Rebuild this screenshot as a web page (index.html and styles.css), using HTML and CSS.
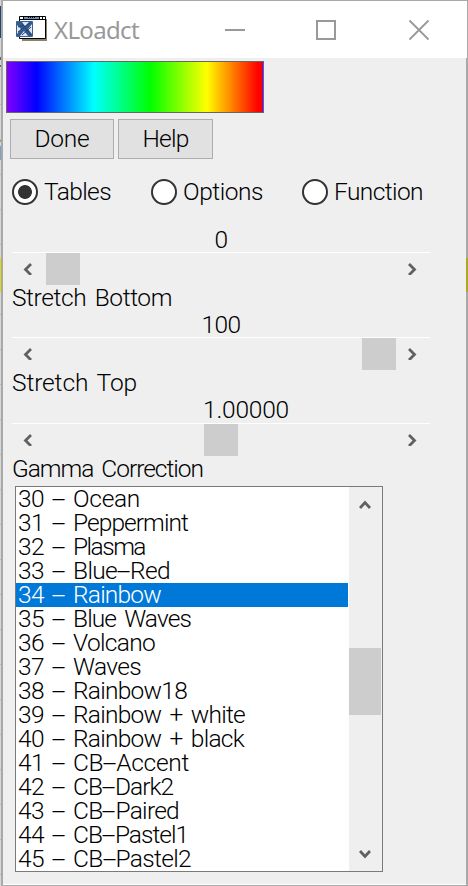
FILE: index.html
```html
<!DOCTYPE html>
<html lang="en">
<head>
<meta charset="utf-8">
<title>XLoadct</title>
<link rel="stylesheet" href="styles.css">
</head>
<body>
<div class="desktop"><i class="band"></i></div>
<main class="window">
  <header class="titlebar">
    <svg class="appicon" width="34" height="28" viewBox="0 0 34 28">
      <path d="M6 23h22V4h3v22H6z" fill="#88836d"/>
      <path d="M3.500 1.500h26v22h-26z" fill="#fff" stroke="#000"/>
      <path d="M7 2h16v2H7z" fill="#6c91bd"/><path d="M4 4.500h25M7.500 1v3M23.500 1v3M26.500 1v3" stroke="#000"/>
      <path d="M12 2.500h8" stroke="#000" stroke-dasharray="1 1"/>
      <path d="M.5 6.500h16v15H.5z" fill="#e3e8ef" stroke="#3b608f"/>
      <path d="M1 7h5l3 4 4-4h3v2l-4 5 4 5v2h-4l-4-5-4 5H1v-2l4-5-4-4z" fill="#315b91"/>
      <path d="M2 12l5-2 8 10M2 17l12-9M6 20l9-8" stroke="#20416d" fill="none"/>
    </svg>
    <h1 data-w="85">XLoadct</h1>
    <svg class="controls" width="206" height="22" viewBox="0 0 206 22" fill="none" stroke="#999">
      <path d="M0 11h20M92 2h18v18H92z" stroke-width="2"/>
      <path d="M184.500 1.500l19 19M203.500 1.500l-19 19" stroke-width="1.800"/>
    </svg>
  </header>
  <div class="spectrum"></div>
  <div class="buttons">
    <button class="done"><span data-w="55">Done</span></button>
    <button class="help"><span data-w="46">Help</span></button>
  </div>
  <div class="radios">
    <label><i class="radio checked"></i><span data-w="67">Tables</span></label>
    <label><i class="radio"></i><span data-w="80">Options</span></label>
    <label><i class="radio"></i><span data-w="89">Function</span></label>
  </div>
  <section class="slider first">
    <div class="value"><span data-w="13">0</span></div>
    <div class="track"><svg class="arrow" viewBox="0 0 10 12"><path d="M8 1L2.500 6.500 8 12"/></svg><i class="thumb"></i><svg class="arrow end" viewBox="0 0 10 12"><path d="M2 1l5.500 5.500L2 12"/></svg></div>
    <div class="caption"><span data-w="160">Stretch Bottom</span></div>
  </section>
  <section class="slider second">
    <div class="value"><span data-w="39">100</span></div>
    <div class="track"><svg class="arrow" viewBox="0 0 10 12"><path d="M8 1L2.500 6.500 8 12"/></svg><i class="thumb"></i><svg class="arrow end" viewBox="0 0 10 12"><path d="M2 1l5.500 5.500L2 12"/></svg></div>
    <div class="caption"><span data-w="125">Stretch Top</span></div>
  </section>
  <section class="slider third">
    <div class="value"><span data-w="86">1.00000</span></div>
    <div class="track"><svg class="arrow" viewBox="0 0 10 12"><path d="M8 1L2.500 6.500 8 12"/></svg><i class="thumb"></i><svg class="arrow end" viewBox="0 0 10 12"><path d="M2 1l5.500 5.500L2 12"/></svg></div>
    <div class="caption"><span data-w="191">Gamma Correction</span></div>
  </section>
  <div class="listbox">
    <ul id="tables"></ul>
    <div class="scrollbar">
      <svg width="12" height="10" viewBox="0 0 12 10"><path d="M1 8l5-5.500L11 8"/></svg>
      <i class="scrollthumb"></i>
      <svg width="12" height="10" viewBox="0 0 12 10"><path d="M1 2l5 5.500L11 2"/></svg>
    </div>
  </div>
</main>
<script src="script.js"></script>
</body>
</html>
```
FILE: styles.css
```css
* { box-sizing: border-box; }
body {
  margin: 0;
  width: 468px;
  height: 886px;
  overflow: hidden;
  position: relative;
  color: #000;
  font: 300 24.5px/24px Roboto, "Liberation Sans", sans-serif;
  word-spacing: 3px;
}
.desktop {
  position: absolute;
  inset: 0;
  background:
    linear-gradient(#204473, #204473) 0 6px / 3px 32px no-repeat,
    linear-gradient(#666, #666) 0 57px / 3px 3px no-repeat,
    linear-gradient(#666, #666) 0 65px / 3px 2px no-repeat,
    linear-gradient(#c19a5a, #c19a5a) 0 140px / 3px 2px no-repeat,
    linear-gradient(#7f9fc5, #7f9fc5) 0 146px / 3px 14px no-repeat,
    repeating-linear-gradient(#d7d7d7 0 34px, #bbb 34px 35px);
}
.band {
  display: block;
  height: 34px;
  margin-top: 258px;
  background: #dede00;
}
.window {
  position: relative;
  width: 467px;
  height: 886px;
  margin-left: 1px;
  background: #efefef;
  border: solid #a9a9a9;
  border-width: 1px 1px 1px 2px;
  box-shadow: inset 0 -1px #fff;
}
.window::after {
  content: "";
  position: absolute;
  right: -1px;
  top: 57px;
  bottom: -1px;
  width: 2px;
  background: linear-gradient(#a9a9a9 200px, #a9aa22 200px 234px, #a9a9a9 234px);
}
span, h1 { white-space: pre; }
span[data-w], h1 { display: inline-block; }
.titlebar {
  height: 57px;
  background: #fff;
  display: flex;
  align-items: center;
  padding-left: 13px;
}
.appicon { margin-top: -1px; }
h1 {
  margin: 0 0 0 4px;
  width: 85px;
  font: 400 24px/28px "Noto Sans", sans-serif;
  color: #999;
}
.controls { margin-left: 86px; }
.spectrum {
  width: 258px;
  height: 52px;
  margin: 3px 0 6px 3px;
  border: 1px solid #666;
  background: linear-gradient(90deg, #8000ff, #00f 11.500%, #0ff 34%, #0f0 56%, #ff0 78%, #f00 98% 99.500%, #8000ff 99.500%);
}
.buttons { display: flex; gap: 4px; padding-left: 7px; }
button {
  height: 40px;
  padding: 0 0 1px;
  border: 1px solid #adadad;
  background: #e1e1e1;
  color: #000;
  font: inherit;
}
.done { width: 104px; }
.help { width: 95px; }
.radios {
  display: grid;
  grid-template-columns: 139px 151px auto;
  height: 26px;
  margin: 20px 0 0 9px;
}
label { display: flex; align-items: center; gap: 6px; }
label span { margin-bottom: 1px; }
.radio {
  width: 26px;
  height: 26px;
  background: #fff;
  border: 2px solid #333;
  border-radius: 50%;
}
.checked { background: radial-gradient(circle, #333 6.500px, #fff 7.300px); }
.slider { width: 418px; margin-left: 9px; height: 85px; }
.first { margin-top: 23px; }
.third { height: 86px; }
.value { height: 24px; text-align: center; }
.third .value { padding-left: 50px; height: 25px; }
.track {
  display: flex;
  align-items: center;
  height: 33px;
  border-top: 1px solid #fff;
  padding: 0 13px 0 11px;
}
.arrow { width: 10px; height: 12px; }
.arrow path, .scrollbar path { fill: none; stroke: #606060; stroke-width: 2.800; }
.arrow.end { margin-left: auto; }
.thumb { width: 34px; height: 32px; margin-left: 13px; background: #cdcdcd; }
.second .thumb { margin-left: 329px; }
.third .thumb { margin-left: 171px; }
.caption { height: 25px; padding-top: 1px; }
.listbox {
  display: flex;
  width: 368px;
  height: 386px;
  margin: 2px 0 0 12px;
  border: 1px solid #7a7a7a;
  background: #fff;
}
ul { list-style: none; margin: 0; padding: 0; width: 333px; }
li { display: flex; height: 24px; padding: 0 0 0 2px; }
li.selected {
  width: 332px;
  background: #0078d7;
  color: #fff;
}
.number { width: 34px; }
.separator { width: 21px; }
.dash { display: inline-block; width: 13px; text-align: center; font-style: normal; letter-spacing: 0; }
.dash b { display: inline-block; font-weight: 300; transform: scaleX(2.100); }
.scrollbar {
  flex: 1;
  display: flex;
  flex-direction: column;
  align-items: center;
  padding: 13px 1px 12px 0;
  background: #efefef;
}
.scrollthumb { width: 100%; height: 67px; margin: 138px 0 auto; background: #cdcdcd; }
```
FILE: script.js
```js
const tables = [
  [30, "Ocean", 140], [31, "Peppermint", 188], [32, "Plasma", 145],
  [33, "Blue-Red", 170], [34, "Rainbow", 161], [35, "Blue Waves", 191],
  [36, "Volcano", 155], [37, "Waves", 141], [38, "Rainbow18", 187],
  [39, "Rainbow + white", 245], [40, "Rainbow + black", 244],
  [41, "CB-Accent", 189], [42, "CB-Dark2", 173], [43, "CB-Paired", 179],
  [44, "CB-Pastel1", 188], [45, "CB-Pastel2", 191]
];
const dash = '<i class="dash"><b>-</b></i>';
document.getElementById("tables").innerHTML = tables.map(([n, name, edge]) =>
  `<li${n === 34 ? ' class="selected"' : ""}><span class="number"><span data-w="26">${n}</span></span><span class="separator">${dash}</span><span data-w="${edge - 73}">${name.replace("-", dash)}</span></li>`
).join("");

function fit(el) {
  const target = Number(el.dataset.w);
  el.style.width = "max-content";
  const natural = el.getBoundingClientRect().width;
  const dashes = el.querySelectorAll(".dash").length;
  el.style.letterSpacing = (target - natural) / (el.textContent.length - dashes) + "px";
  el.style.width = target + "px";
}
document.querySelectorAll("[data-w]").forEach(fit);
```
